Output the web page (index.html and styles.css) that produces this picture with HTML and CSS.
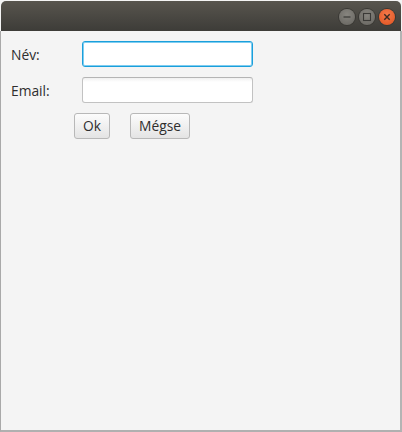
FILE: index.html
```html
<!DOCTYPE html>
<html>
<head>
<meta charset="utf-8">
<link rel="stylesheet" href="styles.css">
</head>
<body>
<div class="window">
  <div class="titlebar">
    <div class="controls">
      <span class="ctl min"><svg width="16" height="16" viewBox="0 0 16 16"><line x1="4.5" y1="8" x2="11.5" y2="8" stroke="#3a3936" stroke-width="1.2"/></svg></span>
      <span class="ctl max"><svg width="16" height="16" viewBox="0 0 16 16"><rect x="4.5" y="4.5" width="7" height="7" fill="none" stroke="#3a3936" stroke-width="1.1"/></svg></span>
      <span class="ctl close"><svg width="16" height="16" viewBox="0 0 16 16"><path d="M5.3 5.3 L10.7 10.7 M10.7 5.3 L5.3 10.7" stroke="#3a2a22" stroke-width="1.4"/></svg></span>
    </div>
  </div>
  <div class="content">
    <div class="form">
      <label class="lbl">Név:</label>
      <div class="field focused"></div>
      <label class="lbl">Email:</label>
      <div class="field"></div>
    </div>
    <div class="buttons">
      <button class="btn ok">Ok</button>
      <button class="btn cancel">Mégse</button>
    </div>
  </div>
</div>
</body>
</html>
```
FILE: styles.css
```css
html, body {
  margin: 0;
  padding: 0;
  background: #f4f4f4;
}
.window {
  width: 402px;
  height: 432px;
  box-sizing: border-box;
  display: flex;
  flex-direction: column;
  font-family: "Open Sans", "DejaVu Sans", sans-serif;
  font-size: 13.8px;
  color: #2e2e2e;
}
.titlebar {
  height: 30px;
  margin: 1px 1px 0 1px;
  border-radius: 5px 5px 0 0;
  background: linear-gradient(#58554e, #3d3c38);
  display: flex;
  justify-content: flex-end;
  align-items: center;
  padding-right: 6px;
  flex: none;
}
.controls {
  display: flex;
  gap: 4px;
  margin-top: 1px;
}
.ctl {
  width: 16px;
  height: 16px;
  border-radius: 50%;
  display: flex;
}
.min, .max {
  background: radial-gradient(circle at 50% 35%, #87857f, #66645f);
  box-shadow: 0 0 0 1px #3a3935;
}
.close {
  background: radial-gradient(circle at 50% 35%, #f5794a, #e0521f);
  box-shadow: 0 0 0 1px #3a3935;
}
.content {
  flex: 1;
  background: #f4f4f4;
  border-left: 1px solid #a9a9a9;
  border-right: 2px solid #b4b4b4;
  border-bottom: 2px solid #b0b0b0;
  padding: 10px 0 0 10px;
}
.form {
  display: grid;
  grid-template-columns: 71px 171px;
  grid-auto-rows: 26px;
  row-gap: 10px;
  align-items: center;
}
.lbl {
  color: #2e2e2e;
}
.field {
  height: 26px;
  box-sizing: border-box;
  border: 1px solid #c2c2c2;
  border-top-color: #b4b4b4;
  border-radius: 3px;
  background: linear-gradient(#f0f0f0, #ffffff 4px);
}
.field.focused {
  border: 1px solid #1a9fdb;
  box-shadow: inset 0 0 0 1px #7fcdf0;
  background: #fff;
}
.buttons {
  display: flex;
  gap: 20px;
  margin-top: 10px;
  margin-left: 63px;
}
.btn {
  height: 26px;
  box-sizing: border-box;
  border: 1px solid #b8b8b8;
  border-radius: 3px;
  background: linear-gradient(#fcfcfc, #e4e4e4);
  font-family: inherit;
  font-size: 13.8px;
  color: #2e2e2e;
  padding: 0 4px;
  line-height: 22px;
}
.ok { width: 36px; }
.cancel { width: 60px; }
```
